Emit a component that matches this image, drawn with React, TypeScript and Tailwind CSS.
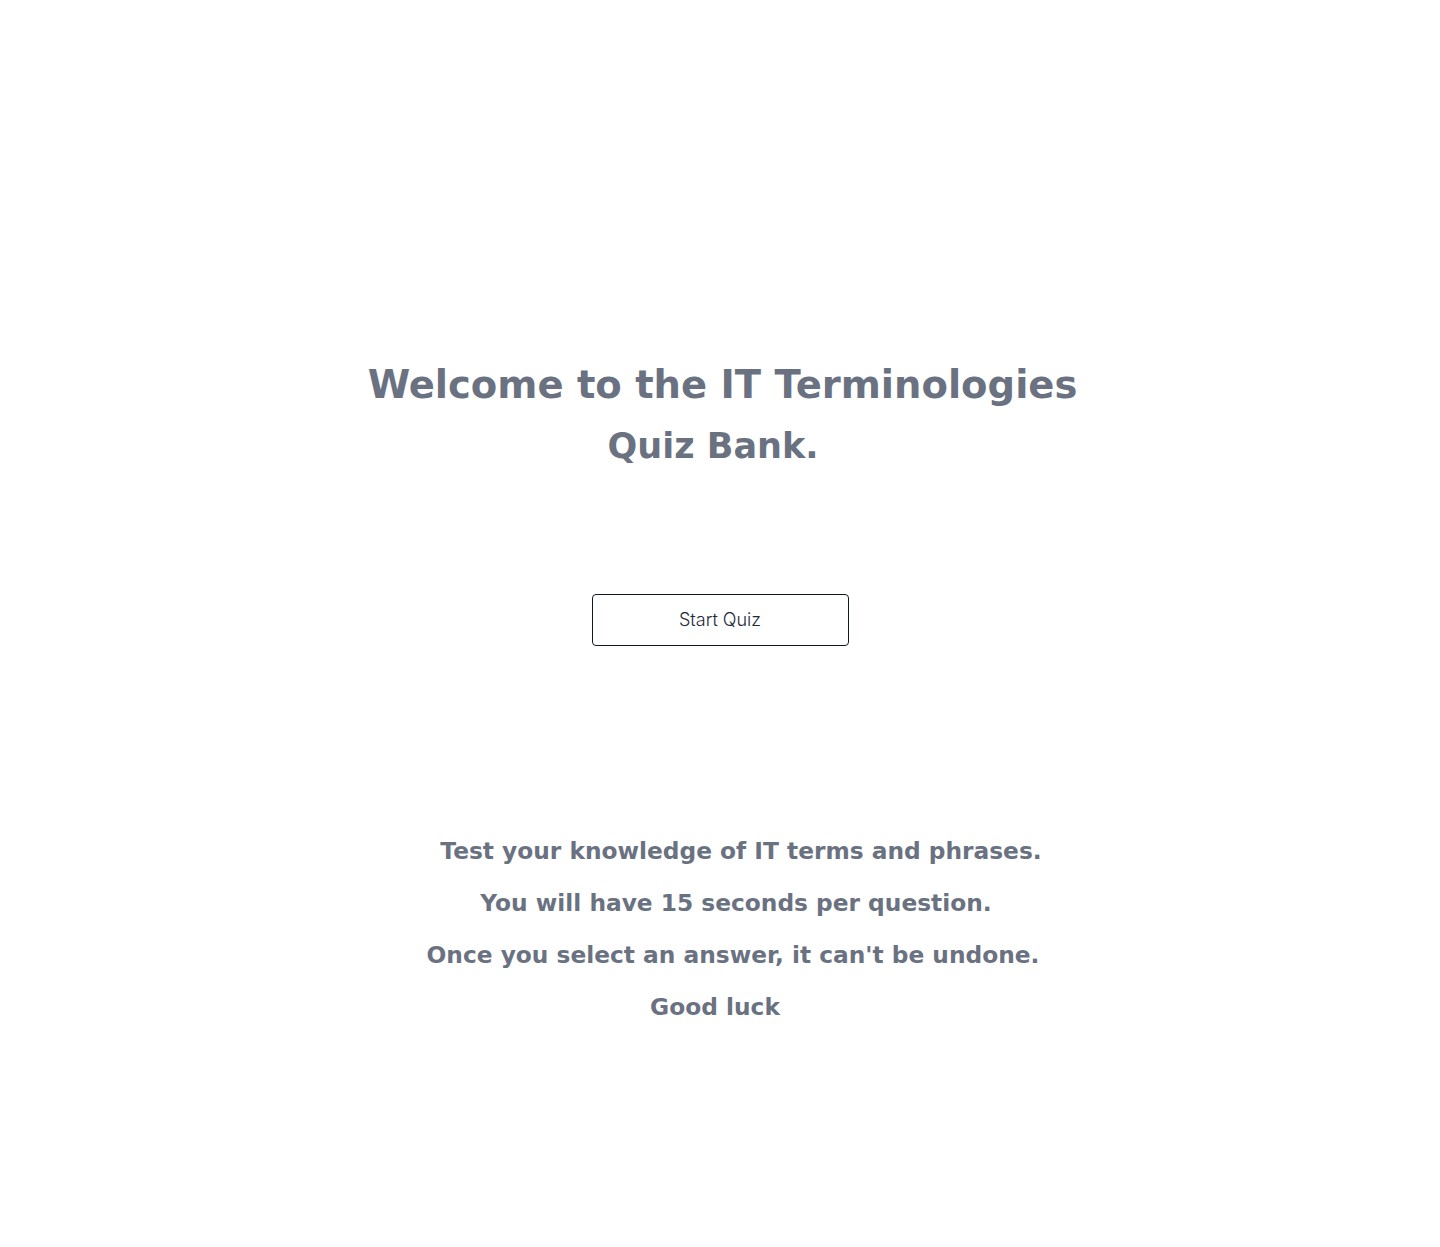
export default function App() {
  const lines = [
    { text: 'Test your knowledge of IT terms and phrases.', cls: 'pl-[42px]' },
    { text: 'You will have 15 seconds per question.', cls: 'pl-[32px]' },
    { text: "Once you select an answer, it can't be undone.", cls: 'pl-[26px]' },
    { text: 'Good luck', cls: 'pr-[10px]' },
  ];

  return (
    <div className="min-h-[1247px] w-full bg-white font-['DejaVu_Sans',sans-serif] text-gray-500">
      <div className="flex flex-col items-center pt-[355px]">
        <h1 className="pl-[5px] text-[38.5px] font-bold leading-[60px]">
          Welcome to the IT Terminologies
        </h1>
        <h2 className="pr-[14px] text-[35px] font-bold leading-[62px]">Quiz Bank.</h2>

        <button className="mt-[117px] h-[52px] w-[257px] rounded-[4px] border border-gray-900 bg-white pb-[2px] font-['Inter',sans-serif] text-[18px] font-light text-gray-800">
          Start Quiz
        </button>

        <div className="mt-[179px] flex flex-col items-center">
          {lines.map((l) => (
            <p key={l.text} className={`text-[23.3px] font-bold leading-[52px] ${l.cls}`}>
              {l.text}
            </p>
          ))}
        </div>
      </div>
    </div>
  );
}
